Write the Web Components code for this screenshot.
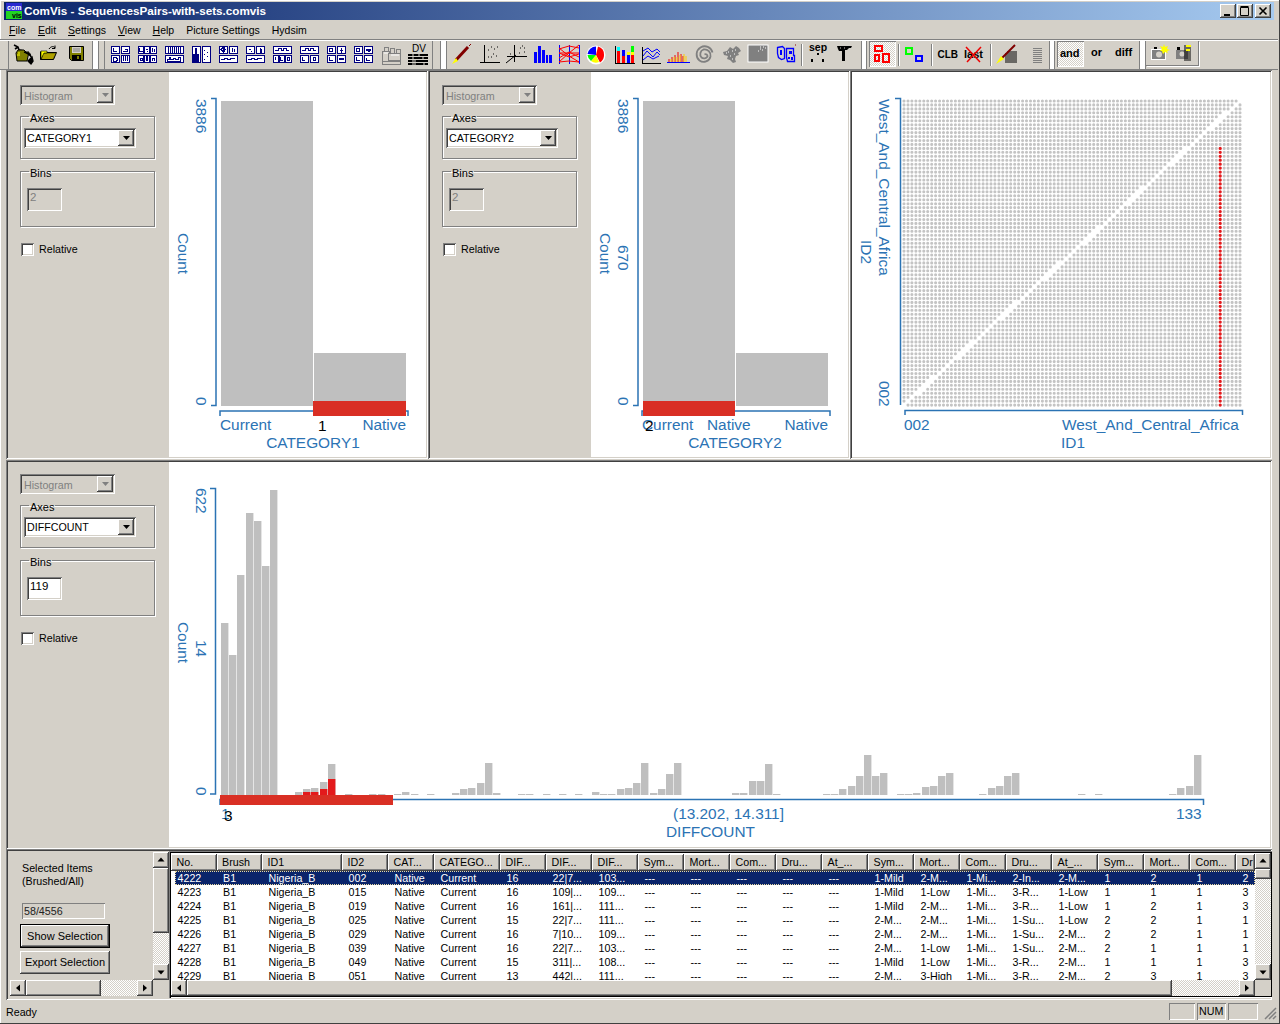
<!DOCTYPE html>
<html><head><meta charset="utf-8"><title>ComVis</title>
<style>
:root{
 --raised:inset -1px -1px #404040,inset 1px 1px #fff,inset -2px -2px #808080,inset 2px 2px #d4d0c8;
 --sunken:inset 1px 1px #808080,inset -1px -1px #fff,inset 2px 2px #404040,inset -2px -2px #d4d0c8;
 --dither:repeating-conic-gradient(#fff 0 25%,#d4d0c8 0 50%) 0 0/2px 2px;
}
html,body{margin:0;padding:0;background:#d4d0c8;overflow:hidden}
body{font:10.7px "Liberation Sans",Arial,sans-serif;color:#000}
</style></head><body>
<comvis-app>
 <win-title slot="title">ComVis - SequencesPairs-with-sets.comvis</win-title>
 <win-menu slot="menu"></win-menu>
 <tool-strip slot="tools"></tool-strip>
 <view-pane slot="p1"><ctrl-panel slot="controls" axis="CATEGORY1" bins="2" binsoff></ctrl-panel><hist-plot spec="a"></hist-plot></view-pane>
 <view-pane slot="p2"><ctrl-panel slot="controls" axis="CATEGORY2" bins="2" binsoff></ctrl-panel><hist-plot spec="b"></hist-plot></view-pane>
 <view-pane slot="p3"><scatter-plot></scatter-plot></view-pane>
 <view-pane slot="p4"><ctrl-panel slot="controls" axis="DIFFCOUNT" bins="119" tight></ctrl-panel><hist-plot spec="c"></hist-plot></view-pane>
 <view-pane slot="p5"><selection-panel slot="controls"></selection-panel><data-table></data-table></view-pane>
 <status-bar slot="status"></status-bar>
</comvis-app>
<script>
function def(name,css,html,init){
  const t=document.createElement('template');
  t.innerHTML='<style>:host{box-sizing:border-box}*{box-sizing:border-box}'+css+'</style>'+html;
  customElements.define(name,class extends HTMLElement{
    constructor(){super();this.attachShadow({mode:'open'}).appendChild(t.content.cloneNode(true));}
    connectedCallback(){if(init&&!this._i){this._i=1;init.call(this,this.shadowRoot);}}
  });
}
const $=(r,s)=>r.querySelector(s);
/* ---------- App frame ---------- */
def('comvis-app',`:host{display:grid;width:1280px;height:1024px;padding:2px 4px 2px 4px;
  grid-template-columns:2px 422px 422px 422px 2px;grid-template-rows:18px 19px 31px 389px 390px 151px 1fr;
  box-shadow:inset -1px -1px #404040,inset 1px 1px #fff}
 .t{grid-column:1/-1;min-width:0}`,
 `<div class="t"><slot name="title"></slot></div><div class="t"><slot name="menu"></slot></div><div class="t"><slot name="tools"></slot></div>
  <div style="grid-area:4/2"><slot name="p1"></slot></div><div style="grid-area:4/3"><slot name="p2"></slot></div><div style="grid-area:4/4"><slot name="p3"></slot></div>
  <div style="grid-area:5/2/5/5;padding-top:1px"><slot name="p4"></slot></div><div style="grid-area:6/2/6/5"><slot name="p5"></slot></div>
  <div class="t" style="grid-row:7"><slot name="status"></slot></div>`);
/* ---------- Title ---------- */
def('win-title',`:host{display:flex;align-items:center;height:18px;background:linear-gradient(90deg,#0a246a,#a6caf0);color:#fff;font:bold 11.7px "Liberation Sans",sans-serif;padding-left:2px}
 .i{flex:none;margin-right:2px}.s{flex:1;white-space:nowrap;padding-bottom:1px}
 .b{flex:none;width:16px;height:14px;background:#d4d0c8;box-shadow:var(--raised);margin-right:1px;display:flex}
 .b:nth-of-type(3){margin-left:1px;margin-right:3px}`,
 `<svg class="i" width="16" height="16" viewBox="0 0 16 16"><rect width="16" height="8" fill="#2a2ad0"/><rect y="8" width="16" height="8" fill="#22d422"/><text x="1" y="7" font-size="7" fill="#fff" font-family="Liberation Sans">com</text><text x="6" y="15" font-size="7" fill="#000" font-family="Liberation Sans">vis</text></svg>
  <span class="s"><slot></slot></span>
  <div class="b"><svg width="16" height="14"><path d="M4 10h6v2H4z"/></svg></div>
  <div class="b"><svg width="16" height="14"><path d="M3.5 3.5h8v8h-8zM3.5 2.5h8" fill="none" stroke="#000"/></svg></div>
  <div class="b"><svg width="16" height="14"><path d="M4.5 3.5l7 7M11.5 3.5l-7 7" stroke="#000" stroke-width="1.6"/></svg></div>`);
/* ---------- Menu ---------- */
def('win-menu',`:host{display:flex;height:19px;align-items:center;padding-left:5px;gap:12px;font-size:10.5px}u{text-decoration:underline}`,
 `<span><u>F</u>ile</span><span><u>E</u>dit</span><span><u>S</u>ettings</span><span><u>V</u>iew</span><span><u>H</u>elp</span><span>Picture Settings</span><span>Hydsim</span>`);
/* ---------- Icons ---------- */
const N='#000080';
const lay=(ps,m,extra='')=>`<g transform="translate(4,5)" shape-rendering="crispEdges">`+ps.map(([x,y,w,h])=>`<rect x="${x+.5}" y="${y+.5}" width="${w}" height="${h}" fill="#fff" stroke="${N}"/>`).join('')+extra+`<path d="${m}" fill="none" stroke="${N}"/></g>`;
const g4=[[0,0,8,7],[10,0,8,7],[0,9,8,7],[10,9,8,7]];
const t2=[[0,0,8,7],[10,0,8,7],[0,9,18,7]];
const T=(x,y,s,fs=11,extra='')=>`<text x="${x}" y="${y}" font-family="Liberation Sans" font-weight="bold" font-size="${fs}" ${extra}>${s}</text>`;
const ICONS={
 opentools:`<path d="M4 4l4 2 1 3 5 1M5 8l3-2" stroke="#000" stroke-width="1.6" fill="none"/><path d="M6 12l2-3h6l2 2h3l-2 9H7z" fill="#808000" stroke="#000"/><path d="M8 12h2M7 14h2M9 14h1" stroke="#ff0"/><path d="M14 11l6 2 1 3M18 20l3 3 2-3 -1-4z" stroke="#000" stroke-width="1.4" fill="#000"/>`,
 folder:`<path d="M3.5 10.5v8h13l3-7h-13l-3 7" fill="#808000" stroke="#000"/><path d="M4 10h6v2H7l-3 6z" fill="#ff0" stroke="#000" stroke-width=".6"/><path d="M7 13h11l-2.5 5H5z" fill="#b0a000"/><path d="M12 8c2-3 5-3 6-1M18 4.5v3h-3" fill="none" stroke="#000"/>`,
 save:`<path d="M5.5 5.5h14v14h-12l-2-2z" fill="#808000" stroke="#000"/><rect x="8" y="6" width="9" height="6" fill="#d4d0c8"/><path d="M9 8h7M9 10h7" stroke="#808080"/><rect x="8" y="14" width="9" height="5" fill="#000"/><rect x="13" y="15" width="2" height="3" fill="#808000"/>`,
 l1:lay(g4,'M2 1.5v4h4M12 5.5h4M14 3.5h2v2M3 11.5h2l1 1v2l-1 1H3l-1-1v-2zM12 10v5m2-5v5m2-5v5'),
 l2:lay([[0,0,5,7],[6,0,5,7],[12,0,6,7],[0,9,5,7],[6,9,5,7],[12,9,6,7]],'M1.5 1.5v4h3M7.5 3.5h2M9 5.5h1M14 2v4M16 3v3M2 12h2v2H2zM8 10v5M9.5 10v5M14 15v-3h2v3'),
 l3:lay([[0,0,18,7],[0,9,18,7]],'M3 1v6M5 1v6M7 1v6M9 1v6M11 1v6M13 1v6M15 1v6M2 15.5v-2h2v-2h1v2h3v-1h2v1h3v-2h2v4z'),
 l4:lay([[0,0,8,16],[10,0,8,16]],'M12 4h1M15 6h1M12 8h1M15 10h1M12 13h1','<rect x="3" y="2" width="2" height="14" fill="'+N+'"/><rect x="1" y="8" width="6" height="8" fill="'+N+'"/>'),
 l5:lay(t2,'M2 3.5l2-2v4zM6 3.5l-1-2v4zM13 2v4M15 3l1 3M2 13.5h3v-1h3v1h3v-1h5'),
 l6:lay(t2,'M3 3.5h2M5 5.5h1M14 2v4h1v-3M2 13.5h3v-1h3v1h3v-1h5'),
 l7:lay([[0,0,18,7],[0,9,5,7],[6,9,5,7],[12,9,6,7]],'M2 4.5h3v-2h3v2h2v-2h3v2h3M2 11v3M7.5 11v3h2M14 11h2v3h-2z'),
 l8:lay([[0,0,18,7],[0,9,8,7],[10,9,8,7]],'M2 4.5h3v-2h3v2h2v-2h3v2h3M2 11v3h3M13 11h2v3h-2z'),
 l9:lay(g4,'M2 2h3v3H2zM14 1.5v5M13 4h3M2 11v3h4M12 12.5h5M12 13.5h5'),
 l10:lay(g4,'M2 2h3v3H2zM12 3.5h5M12 4.5h5M14 5h2M2 11v3h4M12 11.5v3h4'),
 gray:`<g fill="#d4d0c8" stroke="#808080" shape-rendering="crispEdges"><rect x="5.5" y="10.5" width="7" height="10"/><rect x="7.5" y="6.5" width="4" height="4"/><rect x="13.5" y="7.5" width="4" height="5"/><rect x="19.5" y="8.5" width="4" height="5"/><rect x="11.5" y="12.5" width="12" height="7"/><rect x="5.5" y="20.5" width="18" height="3"/></g><path d="M7 12h4M14 14h8" stroke="#fff"/>`,
 dv:`<text x="8" y="11" font-family="Liberation Sans" font-size="10">DV</text><g fill="#000" shape-rendering="crispEdges"><rect x="4" y="13" width="20" height="2"/><rect x="4" y="16" width="20" height="2"/><rect x="4" y="19" width="20" height="2"/><rect x="4" y="22" width="20" height="2"/></g><path d="M9 13v11M15 13v3M19 16v3M11 19v5M20 21v3" stroke="#d4d0c8"/>`,
 brush:`<path d="M8 19l12-13" stroke="#800000" stroke-width="3"/><path d="M21 5l2-2" stroke="#800000"/><path d="M8 17l2 3-6 3z" fill="#ff0"/>`,
 scatter:`<path d="M9.5 4v18M5 21.5h20" stroke="#000" fill="none"/><path d="M13 16h1M16 16h1M18 13h1M19 8h1M16 6h1M22 6h1M21 15h1M13 9h1" stroke="#000"/>`,
 scatter3:`<path d="M12.5 4v17M5 15.5h20M4 22l10-8" stroke="#000" fill="none"/><path d="M18 7h1M22 7h1M22 11h1M17 12h1M8 13h1M20 5h1" stroke="#000"/>`,
 bars:`<g fill="#00f" shape-rendering="crispEdges"><rect x="5" y="11" width="3" height="11"/><rect x="9" y="5" width="3" height="17"/><rect x="13" y="9" width="3" height="13"/><rect x="17" y="14" width="2" height="8"/><rect x="20" y="14" width="3" height="8"/></g>`,
 parallel:`<path d="M3.5 4v19M13.5 4v19M23.5 4v19" stroke="#00f" fill="none"/><path d="M3 8l10-3 10 2M3 12l10 4 10-3M3 17l10-6 10 5M3 21l10-1 10 1M3 7l10 8 10 6M3 21l10-9 10-8M3 12h20" stroke="#f00" fill="none"/>`,
 pie:`<circle cx="13" cy="14" r="9.5" fill="#fff"/><path d="M13 14V5.5A8.5 8.5 0 0 0 4.5 13z" fill="#00f"/><path d="M13 14l2-8.500a8.5 8.5 0 0 1 6 8.500z" fill="#f00"/><path d="M13 14h8a8.5 8.5 0 0 1-4 7.500z" fill="#f00"/><path d="M13 14l3 7a8.5 8.5 0 0 1-8 -1z" fill="#ff0"/><path d="M13 14l-5 6a8.5 8.5 0 0 1-3.500 -6z" fill="#0f0"/>`,
 stacked:`<path d="M5.5 5v18M5 22.5h20" stroke="#000" fill="none"/><g shape-rendering="crispEdges"><rect x="7" y="6" width="3" height="4" fill="#0ff"/><rect x="7" y="10" width="3" height="12" fill="#f00"/><rect x="12" y="9" width="3" height="6" fill="#00f"/><rect x="12" y="15" width="3" height="7" fill="#f00"/><rect x="17" y="11" width="3" height="3" fill="#ff0"/><rect x="17" y="14" width="3" height="8" fill="#00f"/><rect x="21" y="5" width="3" height="6" fill="#0f0"/><rect x="21" y="11" width="3" height="3" fill="#ff0"/><rect x="21" y="14" width="3" height="8" fill="#f00"/></g>`,
 lines:`<path d="M5.5 6v17M5 22.5h19" stroke="#000" fill="none"/><path d="M6 10l5-3 4 4 5-3 3 3M6 15l4-5 6 6 4-5 3 3M6 19l5-4 5 3 6-3" stroke="#00f" fill="none"/>`,
 ridge:`<path d="M3 21.5h23" stroke="#00f" fill="none"/><g stroke="#e00"><path d="M5 21v-3M8 21v-5M11 21v-7M14 21v-10M17 21v-8M19 21v-6"/></g><g stroke="#fc0"><path d="M7 21v-3M10 21v-5M13 21v-5M16 21v-7M20 21v-8M22 21v-6"/></g>`,
 spiral:`<path d="M13.5 13.5a2 2 0 0 1 3 2 4 4 0 0 1-6 1 5 5 0 0 1 2-8 6 6 0 0 1 7 7 7 7 0 0 1-11 4 8 8 0 0 1 1-13 8 8 0 0 1 12 5" fill="none" stroke="#808080" stroke-width="1.8"/>`,
 blob:`<path d="M5 11l4-1 3-4 3 2 3-3 3 2 2 3-3 2 1 2-3 1-1 3 1 3-3 1-3-3-3-1 1-3-4-1z" fill="#808080"/><path d="M10 11h1M14 10h1M17 9h1M12 15h1M16 13h1M14 18h1M8 12h1" stroke="#fff"/>`,
 square:`<rect x="3" y="4" width="20" height="17" fill="#808080" stroke="#fff"/><path d="M15 8h1M18 6h1M13 10h1M17 9h1M20 7h1M15 6h1" stroke="#fff"/>`,
 map:`<path d="M5.5 6.5l5-1 2 2v10l-3 1-3-2-1-4zM14.5 7.5h7v7h1v6h-7l-1-4z" fill="none" stroke="#00f" stroke-width="1.3"/><path d="M8 9h2v5H8zM17 10h3v3h-3zM16 16h2v2h-2zM19 16h2v3h-2z" fill="#00f"/><path d="M23 4h1" stroke="#800"/>`,
 sep:T(5,10,'sep',10.5,'fill="#000"')+`<path d="M13 12h2v2h-2zM7 18h2v3H7zM18 18h2v3h-2z"/>`,
 tee:`<path d="M6 5h15l-1 2h-2l-2 2h-2v11h-3V10H8L7 8z" fill="#000"/><path d="M9 7h1M13 7h1" stroke="#d4d0c8"/>`,
 redrects:`<g fill="none" stroke="#f00" stroke-width="2" shape-rendering="crispEdges"><rect x="6" y="5" width="7" height="5"/><rect x="6" y="14" width="4" height="6"/><rect x="14" y="13" width="6" height="8"/></g>`,
 gb:`<g fill="none" stroke-width="2" shape-rendering="crispEdges"><rect x="5" y="7" width="6" height="6" stroke="#0f0"/><rect x="15" y="15" width="6" height="5" stroke="#00f"/></g>`,
 clb:T(3.5,16.5,'CLB',10,'fill="#000"'),
 last:T(3,16.5,'last',11,'fill="#000"')+`<path d="M5 6l14 15M20 6L6 21" stroke="#e00" stroke-width="1.5"/>`,
 brushlines:`<path d="M12 13h12M12 15h12M12 17h12M12 19h12M12 21h12M14 11h10" stroke="#000" fill="none"/><path d="M8 18L22 4" stroke="#800000" stroke-width="2"/><path d="M8 15l3 3-8 5z" fill="#ff0"/>`,
 list:`<path d="M13 7.5h9M13 9.5h9M13 11.5h9M13 13.5h9M13 15.5h9M13 17.5h9M13 19.5h9M13 21.5h9" stroke="#808080"/><path d="M12.500 6.5h10v16h-10z" fill="none" stroke="#d4d0c8"/>`,
 and:T(3,16,'and',11,'fill="#000"'),
 or:T(7,15,'or',11,'fill="#000"'),
 diff:T(4,15,'diff',11,'fill="#000"'),
 cam:`<rect x="5.5" y="8.5" width="14" height="10" fill="#808080" stroke="#fff"/><rect x="8" y="6" width="3" height="2" fill="#000"/><circle cx="13" cy="13.5" r="3" fill="#d4d0c8"/><path d="M18 3l1 3 3-1-1 3 3 1-3 1 1 2-3-1-2 2-1-3-2 0 2-2-2-3 3 1z" fill="#ff0"/>`,
 camlist:`<rect x="3" y="9" width="12" height="9" fill="#808080"/><rect x="4" y="6" width="3" height="3" fill="#000"/><circle cx="9" cy="13" r="2.5" fill="#d4d0c8"/><path d="M11 5h7M11 7h7M11 9h7M11 11h7M11 13h7M11 15h7M11 17h7M11 19h7" stroke="#000"/><path d="M13 4h5v2h-5zM13 8h4v2h-4z" fill="#ff0"/>`
};
def('tool-btn',`:host{display:block;flex:none;width:27px;height:26px}:host([pressed]){background:var(--dither);box-shadow:inset 1px 1px #808080,inset -1px -1px #fff}
 svg{display:block}`,`<svg width="27" height="26" viewBox="0 0 27 26"></svg>`,function(r){$(r,'svg').innerHTML=ICONS[this.getAttribute('icon')]||'';});
def('tool-sep',`:host{display:block;flex:none;width:2px;height:22px;margin:3px 1px 0 2.5px;border-left:1px solid #808080;border-right:1px solid #fff}`,'');
def('tool-grip',`:host{display:block;flex:none;height:28px;background:#fff;border-left:1px solid #808080;border-right:1px solid #808080}`,'');
def('tool-thin',`:host{display:block;flex:none;height:28px;width:1px;background:#808080}`,'');
def('tool-group',`:host{display:flex;flex:none;height:25px;border-right:1px solid #808080;border-bottom:1px solid #808080;box-shadow:1px 1px #fff}`,'<slot></slot>');
def('tool-strip',`:host{display:flex;height:31px;margin:0 -4px;padding:1px 0 0 8px;border-top:1px solid #808080;box-shadow:inset 0 1px #fff;background:#d4d0c8;border-bottom:1px solid #808080}`,'<slot></slot>',function(){
 const seq=[['thin',0,2],'opentools','folder','save',['grip',1,7],['thin',5,2.5],'l1','l2','l3','l4','l5','l6','l7','l8','l9','l10','gray','dv',['thin',1.5,0],['grip',6.5,7],['gap',1],
 'brush','scatter','scatter3','bars','parallel','pie','stacked','lines','ridge','spiral','blob','square','map','S','sep','tee',['grip',2.5,6],['gap',2],
 '*redrects','S','gb','S','clb','last','S','brushlines','list',['grip',1.5,6],['gap',2.5],'*and','or','diff',['grip',1,7]];
 let h='';
 for(const s of seq){
  if(s==='S')h+='<tool-sep></tool-sep>';
  else if(Array.isArray(s)){
   if(s[0]==='gap')h+=`<span style="flex:none;width:${s[1]}px"></span>`;
   else if(s[0]==='thin')h+=`<tool-thin style="margin-left:${s[1]}px;margin-right:${s[2]?s[2]-1:0}px"></tool-thin>`;
   else h+=`<tool-grip style="margin-left:${s[1]}px;width:${s[2]}px"></tool-grip>`;
  }else if(s[0]==='*')h+=`<tool-btn icon="${s.slice(1)}" pressed></tool-btn>`;
  else h+=`<tool-btn icon="${s}"></tool-btn>`;
 }
 h+='<tool-group><tool-btn icon="cam"></tool-btn><tool-btn icon="camlist" style="width:25px"></tool-btn></tool-group>';
 this.innerHTML=h;
});
/* ---------- Panes ---------- */
def('view-pane',`:host{display:flex;height:100%;width:100%;background:#fff;box-shadow:inset 1px 1px #808080,inset -1px -1px #fff,inset 2px 2px #404040,inset -2px -2px #d4d0c8;padding:2px;overflow:hidden}
 ::slotted(*){flex:none}.m{flex:1;min-width:0;display:flex}`,`<slot name="controls"></slot><div class="m"><slot></slot></div>`);
/* ---------- Form controls ---------- */
def('win-combo',`:host{display:flex;height:20px;background:#fff;box-shadow:var(--sunken);padding:2px;align-items:stretch;color:#000}
 :host([disabled]){background:#d4d0c8;color:#808080}
 .v{flex:1;padding:2px 0 0 1px;white-space:nowrap;overflow:hidden}
 :host([disabled]) .v{padding-top:3px;padding-left:2px}
 .a{flex:none;width:16px;background:#d4d0c8;box-shadow:var(--raised);display:flex;align-items:center;justify-content:center}
 svg{fill:#000}:host([disabled]) svg{fill:#808080}`,
 `<span class="v"><slot></slot></span><span class="a"><svg width="7" height="4"><path d="M0 0h7L3.5 4z"/></svg></span>`);
def('group-box',`:host{display:block}
 fieldset{margin:0;padding:5px 0 0 3px;height:var(--h);border:1px solid #808080;box-shadow:1px 1px #fff,inset 1px 1px #fff}
 legend{padding:0 1px;margin-left:5px;font-size:11px;line-height:16px;height:13px}`,
 `<fieldset><legend></legend><slot></slot></fieldset>`,function(r){$(r,'legend').textContent=this.getAttribute('label');$(r,'fieldset').style.setProperty('--h',this.getAttribute('h')+'px');});
def('text-field',`:host{display:block;height:23px;box-shadow:var(--sunken);background:#fff;padding:3px 0 0 3px;font-size:11.5px}
 :host([disabled]){background:#d4d0c8;color:#808080}`,`<slot></slot>`);
def('win-check',`:host{display:flex;align-items:center;gap:5px;height:14px}
 i{display:block;width:13px;height:13px;background:#fff;box-shadow:var(--sunken)}`,`<i></i><slot></slot>`);
def('win-button',`:host{display:flex;align-items:center;justify-content:center;width:90px;height:23px;background:#d4d0c8;box-shadow:var(--raised);white-space:nowrap;font-size:11px}
 :host([default]){box-shadow:inset 0 0 0 1px #000,inset -2px -2px #404040,inset 2px 2px #fff,inset -3px -3px #808080;height:24px}`,`<slot></slot>`);
def('ctrl-panel',`:host{display:flex;flex-direction:column;width:161px;height:100%;background:#d4d0c8;padding:13px 0 0 12px}
 :host([tight]){padding-top:12px}
 win-combo.h{width:95px}group-box{width:135px}group-box.a{margin-top:5px}group-box.b{margin-top:6px}
 win-combo.x{width:112px}text-field{width:35px;margin:5px 0 0 3px}win-check{margin-top:15px;margin-left:1px}`,
 `<win-combo class="h" disabled>Histogram</win-combo>
  <group-box class="a" label="Axes" h="49"><win-combo class="x"></win-combo></group-box>
  <group-box class="b" label="Bins" h="62"><text-field></text-field></group-box>
  <win-check>Relative</win-check>`,function(r){
   $(r,'.x').textContent=this.getAttribute('axis');const f=$(r,'text-field');f.textContent=this.getAttribute('bins');
   if(this.hasAttribute('binsoff'))f.setAttribute('disabled','');
  });
def('scroll-bar',`:host{display:flex;background:var(--dither);flex:none;min-width:0;min-height:0}:host([dir=v]){flex-direction:column;width:16px}:host([dir=h]){height:16px}
 .b,.th{background:#d4d0c8;box-shadow:var(--raised);flex:none;display:flex;align-items:center;justify-content:center}
 :host([dir=v]) .b{height:16px}:host([dir=h]) .b{width:16px}.sp{flex:none}.r{flex:1}`,
 `<div class="b p"></div><div class="sp"></div><div class="th"></div><div class="r"></div><div class="b n"></div>`,function(r){
  const v=this.getAttribute('dir')==='v',p=v?'height':'width';
  $(r,'.sp').style[p]=(this.getAttribute('before')||0)+'px';$(r,'.th').style[p]=this.getAttribute('thumb')+'px';
  const a=(d)=>`<svg width="8" height="8" viewBox="0 0 8 8"><path d="${d}"/></svg>`;
  $(r,'.p').innerHTML=a(v?'M4 1.5L7.5 5.5H.5z':'M2 4L6 .5v7z');$(r,'.n').innerHTML=a(v?'M4 6.5L7.5 2.5H.5z':'M6 4L2 .5v7z');
 });
def('selection-panel',`:host{display:grid;grid-template-columns:145px 16px;grid-template-rows:minmax(0,1fr) 16px;width:161px;height:100%;background:#d4d0c8;padding:1px 0 2px 0}
 .c{padding:10px 0 0 14px;line-height:13px;overflow:hidden}
 .f{width:83px;height:16px;margin-top:15px;box-shadow:inset 1px 1px #808080,inset -1px -1px #fff;padding:2px 0 0 2px;color:#222}
 win-button{margin-left:-2px;margin-top:5px}win-button+win-button{margin-top:3px}
 scroll-bar[dir=h]{margin-left:2px}`,
 `<div class="c"><div>Selected Items</div><div>(Brushed/All)</div><div class="f">58/4556</div>
   <win-button default>Show Selection</win-button><win-button>Export Selection</win-button></div>
  <scroll-bar dir="v" thumb="65"></scroll-bar><scroll-bar dir="h" thumb="75"></scroll-bar><div></div>`);
/* ---------- Table ---------- */
const COLS=[45.5,45.5,80,46,46,66,46,46,46,46,46,46,46,46,46,46,46,46,46,46,46,46,19];
const HEAD=['No.','Brush','ID1','ID2','CAT...','CATEGO...','DIF...','DIF...','DIF...','Sym...','Mort...','Com...','Dru...','At_...','Sym...','Mort...','Com...','Dru...','At_...','Sym...','Mort...','Com...','Dr'];
const D=[['002','16','22|7...','103...','1-Mild','2-M...','2-In...','2-M...','1 2 1 2'],
['015','16','109|...','109...','1-Mild','1-Low','3-R...','1-Low','1 1 1 3'],
['019','16','161|...','111...','1-Mild','2-M...','3-R...','1-Low','1 2 1 3'],
['025','15','22|7...','111...','2-M...','2-M...','1-Su...','1-Low','2 2 1 1'],
['029','16','7|10...','109...','2-M...','2-M...','1-Su...','2-M...','2 2 1 1'],
['039','16','22|7...','103...','2-M...','1-Low','1-Su...','2-M...','2 1 1 1'],
['049','15','311|...','108...','1-Mild','1-Low','3-R...','2-M...','1 1 1 3'],
['051','13','442|...','111...','2-M...','3-High','3-R...','2-M...','2 3 1 3']];
def('data-table',`:host{display:grid;grid-template-columns:minmax(0,1fr) 16px;grid-template-rows:minmax(0,1fr) 16px;flex:1;height:100%;background:#d4d0c8;box-shadow:inset 1px 1px #808080,inset 2px 2px #000,inset -1px -1px #fff,inset -2px -2px #000;padding:2px;min-width:0}
 .l{background:#fff;overflow:hidden;min-width:0;min-height:0}
 .hd,.r{display:flex;white-space:nowrap}
 .hd span{flex:none;height:17px;background:#d4d0c8;box-shadow:var(--raised);padding:2px 0 0 5.5px;overflow:hidden}
 .r{height:14px;margin-left:4px;line-height:14px}
 .r span{flex:none;padding-left:6.5px;overflow:hidden}
 .r span:first-child{padding-left:2.5px}
 .r.sel{background:#0a246a;color:#fff;outline:1px dotted #e8d9a0;outline-offset:-1px}
 .hd{margin-top:1px}`,
 `<div class="l"><div class="hd"></div><div class="rows"></div></div><scroll-bar dir="v" thumb="10"></scroll-bar><scroll-bar dir="h" thumb="985"></scroll-bar><div></div>`,function(r){
  $(r,'.hd').innerHTML=HEAD.map((h,i)=>`<span style="width:${COLS[i]}px">${h}</span>`).join('');
  $(r,'.rows').innerHTML=D.map((d,n)=>{
   const v=[String(4222+n),'B1','Nigeria_B',d[0],'Native','Current',d[1],d[2],d[3],'---','---','---','---','---',d[4],d[5],'1-Mi...',d[6],d[7],...d[8].split(' ')];
   return `<div class="r${n?'':' sel'}">`+v.map((t,i)=>`<span style="width:${i?COLS[i]:COLS[i]-4}px">${t}</span>`).join('')+'</div>';
  }).join('');
 });
def('status-bar',`:host{display:flex;align-items:center;height:22px;padding:1px 0 0 2px;margin:0 -4px 0 0;gap:2px}
 .s{flex:1}.p{flex:none;height:17px;box-shadow:inset 1px 1px #808080,inset -1px -1px #fff;padding:2px 0 0 2px}
 svg{flex:none;margin:3px 1px 0 4px}`,
 `<span class="s">Ready</span><span class="p" style="width:26px"></span><span class="p" style="width:29px">NUM</span><span class="p" style="width:30px"></span>
  <svg width="13" height="13"><path d="M12 1L1 12M12 5L5 12M12 9L9 12" stroke="#808080" stroke-width="1.5"/></svg>`);
/* ---------- Plots ---------- */
const BLUE='#2b73b4',GR='#bfbfbf',RD='#d92f24',FF='font-family="Liberation Sans" font-size="15.4"';
const tx=(x,y,s,o={})=>`<text x="${x}" y="${y}" ${FF} fill="${o.fill||BLUE}" ${o.rot?`transform="rotate(90 ${x} ${y})"`:''} ${o.a?`text-anchor="${o.a}"`:''}>${s}</text>`;
const rc=(x,y,w,h,f)=>`<rect x="${x}" y="${y}" width="${w}" height="${h}" fill="${f}"/>`;
const axis=d=>`<path d="${d}" fill="none" stroke="${BLUE}" stroke-width="1.5"/>`;
function topHist(dx,lab,red,num,mid,nativeX){
 return rc(221+dx,101,92,305,GR)+rc(314+dx,353,92,53,GR)
  +axis(`M${211+dx} 98.5H${216+dx}V405.5H${211+dx}M${220+dx} 416V411H${408+dx}V416`)
  +rc(red+dx,401,red==313?93:92,15,RD)
  +tx(196+dx,99,'3886',{rot:1})+(mid?tx(196+dx,245,mid,{rot:1}):'')+tx(196+dx,397,'0',{rot:1})+tx(178+dx,233,'Count',{rot:1})
  +tx(220+dx,430,'Current')+tx(406+dx,430,'Native',{a:'end'})+(nativeX?tx(nativeX,430,'Native'):'')+tx(313+dx,448,lab,{a:'middle'})
  +tx(num[0],431,num[1],{fill:'#000'});
}
const B=[[221,172],[229,140],[237,220],[246,282],[254,274],[262,229],[270,305],[295,3],[303,6,3],[311,7,3],[320,13,6],[328,31,16],[345,1],[369,1],[378,1],[394,1],[402,3],[411,1],[427,1],[452,2],[460,6],[468,7],[477,12],[485,32],[493,2],[518,1],[526,1],[543,1],[559,1],[575,1],[592,3],[600,1],[608,1],[617,6],[625,7],[633,12],[641,32],[650,2],[658,6],[666,21],[674,32],[732,2],[740,2],[749,14],[757,14],[765,31],[773,1],[823,1],[831,1],[839,6],[848,9],[856,19],[864,40],[872,19],[880,22],[897,1],[905,1],[913,2],[922,8],[930,9],[938,19],[946,22],[979,1],[988,7],[996,9],[1004,19],[1012,22],[1078,1],[1095,1],[1169,1],[1177,7],[1186,9],[1194,40]];
const SPEC={
 a:{x:169,y:72,w:257,h:385,body:()=>topHist(0,'CATEGORY1',313,[318,'1'])},
 b:{x:591,y:72,w:257,h:385,body:()=>topHist(422,'CATEGORY2',221,[645,'2'],'670',707)},
 c:{x:169,y:462,w:1101,h:385,body:()=>B.map(([x,h,r])=>rc(x,795-h,7.4,h,GR)+(r?rc(x,795-r,7.4,r,'#e31a1c'):'')).join('')
  +axis('M210 488.5H215.5V794H210M220 805V799.5H1203.5V805')+rc(220,795,173,10,RD)
  +tx(196,488,'622',{rot:1})+tx(196,640,'14',{rot:1})+tx(196,787,'0',{rot:1})+tx(178,622,'Count',{rot:1})
  +tx(221,819,'1')+tx(224,821,'3',{fill:'#000'})+tx(673,819,'(13.202, 14.311]')+tx(666,837,'DIFFCOUNT')+tx(1176,819,'133')}
};
const svgIn=(s)=>`<svg width="${s.w}" height="${s.h}" viewBox="${s.x} ${s.y} ${s.w} ${s.h}" style="display:block">${s.body()}</svg>`;
def('hist-plot',`:host{display:block;flex:1;background:#fff;overflow:hidden}`,`<div></div>`,function(r){$(r,'div').innerHTML=svgIn(SPEC[this.getAttribute('spec')]);});
def('scatter-plot',`:host{display:block;flex:1;background:#fff;overflow:hidden}`,`<div></div>`,function(r){
 let g='',rd='';const cols=86,rows=78,px=3.953,py=3.949;
 for(let i=0;i<cols;i++)for(let j=0;j<rows;j++){
  const x=(904+i*px).toFixed(1),y=(101+j*py).toFixed(1);
  if(Math.abs((i/(cols-1))+(j/(rows-1))-1)<.009)continue;
  if(Math.abs(x-1220)<1.8&&y>145)rd+=`M${x} ${y}h0`;else g+=`M${x} ${y}h0`;
 }
 $(r,'div').innerHTML=svgIn({x:852,y:72,w:418,h:385,body:()=>`<path d="${g}" stroke="#c4c4c4" stroke-width="3.1" stroke-linecap="round"/><path d="${rd}" stroke="#e31a1c" stroke-width="3.3" stroke-linecap="round"/>`
  +axis('M895 98.5H900.5V405M905 415V410.5H1242.5V415')
  +tx(879,99,'West_And_Central_Africa',{rot:1})+tx(861,240,'ID2',{rot:1})+tx(879,381,'002',{rot:1})
  +tx(904,430,'002')+tx(1062,430,'West_And_Central_Africa')+tx(1061,448,'ID1')});
});
</script>
</body></html>
